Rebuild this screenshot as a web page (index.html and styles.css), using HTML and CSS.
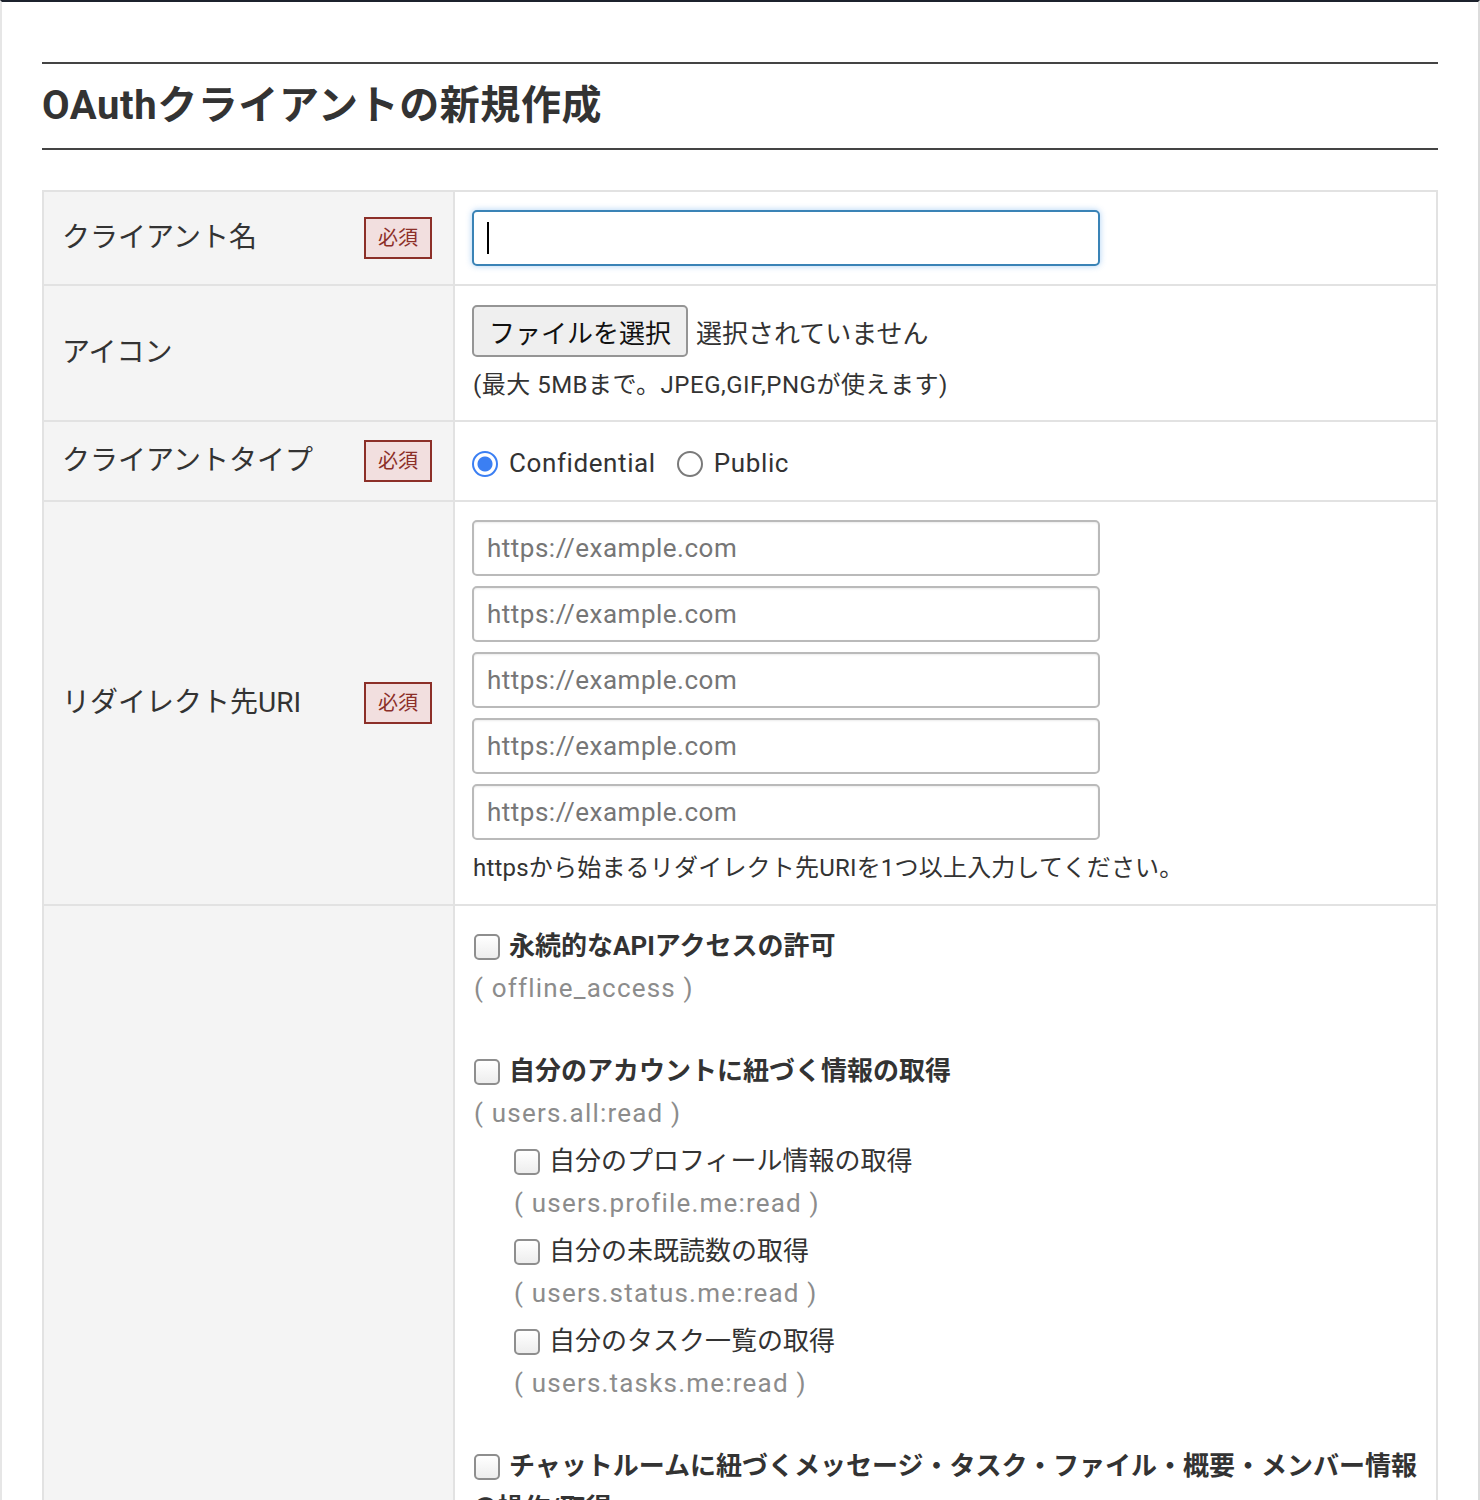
FILE: index.html
```html
<!DOCTYPE html>
<html lang="ja">
<head>
  <meta charset="UTF-8">
  <meta name="viewport" content="width=device-width, initial-scale=1.0">
  <title>OAuthクライアントの新規作成</title>
  <link rel="stylesheet" href="styles.css">
</head>
<body>

  <div class="page">
    <h1 class="page-title">OAuthクライアントの新規作成</h1>

    <form class="form-table">
      <!-- クライアント名 -->
      <div class="form-row">
        <div class="form-label">
          <span>クライアント名</span>
          <span class="required">必須</span>
        </div>
        <div class="form-field field-name">
          <input type="text" class="text-input is-focused">
        </div>
      </div>

      <!-- アイコン -->
      <div class="form-row">
        <div class="form-label">
          <span>アイコン</span>
        </div>
        <div class="form-field">
          <div class="file-line">
            <button type="button" class="file-btn">ファイルを選択</button>
            <span class="file-status">選択されていません</span>
          </div>
          <p class="note">(最大 5MBまで。JPEG,GIF,PNGが使えます)</p>
        </div>
      </div>

      <!-- クライアントタイプ -->
      <div class="form-row">
        <div class="form-label">
          <span>クライアントタイプ</span>
          <span class="required">必須</span>
        </div>
        <div class="form-field field-radio">
          <label class="radio-label"><input type="radio" name="type" checked>Confidential</label>
          <label class="radio-label"><input type="radio" name="type">Public</label>
        </div>
      </div>

      <!-- リダイレクト先URI -->
      <div class="form-row">
        <div class="form-label">
          <span>リダイレクト先URI</span>
          <span class="required">必須</span>
        </div>
        <div class="form-field field-uris">
          <input type="text" class="text-input" placeholder="https://example.com">
          <input type="text" class="text-input" placeholder="https://example.com">
          <input type="text" class="text-input" placeholder="https://example.com">
          <input type="text" class="text-input" placeholder="https://example.com">
          <input type="text" class="text-input" placeholder="https://example.com">
          <p class="hint">httpsから始まるリダイレクト先URIを1つ以上入力してください。</p>
        </div>
      </div>

      <!-- スコープ -->
      <div class="form-row">
        <div class="form-label"></div>
        <div class="form-field field-scopes">
          <div class="scope-group">
            <label class="scope-check strong"><input type="checkbox">永続的なAPIアクセスの許可</label>
            <div class="scope-code">( offline_access )</div>
          </div>

          <div class="scope-group">
            <label class="scope-check strong"><input type="checkbox">自分のアカウントに紐づく情報の取得</label>
            <div class="scope-code">( users.all:read )</div>
            <div class="scope-sub">
              <label class="scope-check"><input type="checkbox">自分のプロフィール情報の取得</label>
              <div class="scope-code">( users.profile.me:read )</div>
              <label class="scope-check"><input type="checkbox">自分の未既読数の取得</label>
              <div class="scope-code">( users.status.me:read )</div>
              <label class="scope-check"><input type="checkbox">自分のタスク一覧の取得</label>
              <div class="scope-code">( users.tasks.me:read )</div>
            </div>
          </div>

          <div class="scope-group">
            <label class="scope-check strong"><input type="checkbox">チャットルームに紐づくメッセージ・タスク・ファイル・概要・メンバー情報の操作/取得</label>
            <div class="scope-code">( rooms.all:read_write )</div>
          </div>
        </div>
      </div>
    </form>
  </div>

</body>
</html>
```

FILE: styles.css
```css
body {
  margin: 0;
  font-family: Roboto, "Noto Sans CJK JP", sans-serif;
  color: #333;
  background-color: #fff;
  border-top: 2px solid #1c222d;
  border-left: 2px solid #e6e6e6;
  border-right: 2px solid #dcdcdc;
}

.page {
  padding: 60px 40px 40px;
}

.page-title {
  margin: 0;
  padding: 12px 0;
  font-size: 40px;
  line-height: 60px;
  font-weight: bold;
  letter-spacing: 0.6px;
  color: #333;
  border-top: 2px solid #444;
  border-bottom: 2px solid #444;
}

.form-table {
  margin-top: 40px;
  border: 2px solid #e2e2e2;
  border-bottom: none;
}

.form-row {
  display: grid;
  grid-template-columns: 411px 1fr;
  border-bottom: 2px solid #e2e2e2;
}

.form-label {
  display: flex;
  justify-content: space-between;
  align-items: center;
  padding: 0 21px 0 18px;
  background-color: #f4f4f4;
  border-right: 2px solid #e2e2e2;
  font-size: 28px;
  line-height: 40px;
}

.required {
  display: inline-block;
  padding: 0 12px;
  font-size: 20px;
  line-height: 38px;
  color: #8c2f28;
  background-color: #f2dfdf;
  border: 2px solid #8c2f28;
}

.form-field {
  padding: 18px 17px 17px;
  font-size: 26px;
}

.field-name {
  padding-bottom: 18px;
}

/* text inputs */
.text-input {
  display: block;
  box-sizing: border-box;
  width: 628px;
  height: 56px;
  padding: 0 13px;
  font-family: Roboto, "Noto Sans CJK JP", sans-serif;
  font-size: 26px;
  letter-spacing: 0.5px;
  color: #333;
  border: 2px solid #bababa;
  border-radius: 5px;
  box-shadow: inset 0 1px 2px rgba(0, 0, 0, 0.08);
  outline: none;
}

.text-input::placeholder {
  color: #767676;
}

.text-input.is-focused {
  border-color: #3a83b6;
  box-shadow: 0 0 6px rgba(70, 150, 230, 0.45);
  background: #fff linear-gradient(#000, #000) no-repeat 13px center / 2px 32px;
}

/* file select */
.file-line {
  display: flex;
  align-items: center;
  margin-top: 1px;
}

.file-btn {
  box-sizing: border-box;
  height: 52px;
  padding: 0 15px;
  font-family: Roboto, "Noto Sans CJK JP", sans-serif;
  font-size: 26px;
  color: #111;
  background-color: #efefef;
  border: 2px solid #959595;
  border-radius: 5px;
}

.file-status {
  margin-left: 8px;
}

.note {
  margin: 10px 0 0 1px;
  font-size: 24px;
  line-height: 36px;
  letter-spacing: 0.5px;
}

/* radio */
.field-radio {
  padding: 20px 17px 16px;
  line-height: 42px;
  letter-spacing: 0.6px;
}

.radio-label {
  margin-right: 14px;
}

.radio-label input {
  appearance: none;
  width: 26px;
  height: 26px;
  margin: 0 11px 0 0;
  vertical-align: -5px;
  border: 2px solid #7a7a7a;
  border-radius: 50%;
  background-color: #fff;
}

.radio-label input:checked {
  border-color: #3b7ff3;
  background: radial-gradient(circle, #3b7ff3 0 7px, #fff 8px);
}

/* redirect uris */
.field-uris {
  padding-bottom: 19px;
}

.field-uris .text-input + .text-input {
  margin-top: 10px;
}

.hint {
  margin: 11px 0 0 1px;
  font-size: 24px;
  line-height: 34px;
  letter-spacing: 0.2px;
}

/* scopes */
.field-scopes {
  padding: 19px 10px 17px 17px;
}

.scope-group + .scope-group {
  margin-top: 41px;
}

.scope-check {
  display: block;
  line-height: 42px;
}

.scope-check.strong {
  font-weight: bold;
}

.scope-check input {
  appearance: none;
  width: 26px;
  height: 26px;
  margin: 0 9px 0 2px;
  vertical-align: -5px;
  border: 2px solid #8e8e8e;
  border-radius: 5px;
  background: linear-gradient(#fff, #ededed);
}

.scope-code {
  margin-left: 2px;
  line-height: 42px;
  letter-spacing: 1.2px;
  color: #8c8c8c;
}

.scope-sub {
  padding-left: 40px;
}

.scope-sub .scope-check {
  margin-top: 6px;
}
```
